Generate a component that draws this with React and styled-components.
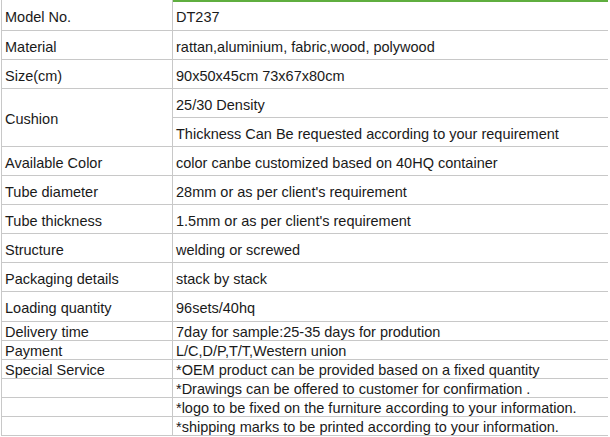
import React from 'react';
import styled, { createGlobalStyle } from 'styled-components';

const GlobalStyle = createGlobalStyle`
  html, body {
    margin: 0;
    padding: 0;
    background: #fff;
  }
  body {
    font-family: "Liberation Sans", Arial, sans-serif;
  }
`;

const Sheet = styled.div`
  display: grid;
  grid-template-columns: 170px 435px;
  grid-template-rows: 30px repeat(9, 28px) 29px repeat(6, 18px);
  gap: 1px;
  background: #c8c8c8;
  width: 607px;
  margin-left: 1px;
  padding: 0 1px 1px 1px;
  box-sizing: border-box;
`;

const Cell = styled.div`
  background: #fff;
  color: #1a1a1a;
  font-size: ${p => (p.$small ? '14.5px' : '14.5px')};
  display: flex;
  align-items: center;
  padding: ${p => (p.$small ? '1px 0 0 3px' : '3px 0 0 3px')};
  white-space: nowrap;
  overflow: hidden;
  grid-row: ${p => (p.$span ? `span ${p.$span}` : 'auto')};
  box-shadow: ${p => (p.$selected ? 'inset 0 2px 0 #5fae3f' : 'none')};
`;

const rows = [
  ['Model No.', 'DT237'],
  ['Material', 'rattan,aluminium, fabric,wood, polywood'],
  ['Size(cm)', '90x50x45cm 73x67x80cm'],
];

const middle = [
  ['Available Color', 'color canbe customized based on 40HQ container'],
  ['Tube diameter', "28mm or as per client's requirement"],
  ['Tube thickness', "1.5mm or as per client's requirement"],
  ['Structure', 'welding or screwed'],
  ['Packaging details', 'stack by stack'],
  ['Loading quantity', '96sets/40hq'],
];

const lower = [
  ['Delivery time', '7day for sample:25-35 days for prodution'],
  ['Payment', 'L/C,D/P,T/T,Western union'],
  ['Special Service', '*OEM product can be provided based on a fixed quantity'],
  ['', '*Drawings can be offered to customer for confirmation .'],
  ['', '*logo to be fixed on the furniture according to your information.'],
  ['', '*shipping marks to be printed according to your information.'],
];

export default function App() {
  return (
    <>
      <GlobalStyle />
      <Sheet>
        {rows.map(([k, v], i) => (
          <React.Fragment key={k}>
            <Cell>{k}</Cell>
            <Cell $selected={i === 0}>{v}</Cell>
          </React.Fragment>
        ))}
        <Cell $span={2}>Cushion</Cell>
        <Cell>25/30 Density</Cell>
        <Cell>Thickness Can Be requested according to your requirement</Cell>
        {middle.map(([k, v]) => (
          <React.Fragment key={k}>
            <Cell>{k}</Cell>
            <Cell>{v}</Cell>
          </React.Fragment>
        ))}
        {lower.map(([k, v], i) => (
          <React.Fragment key={i}>
            <Cell $small>{k}</Cell>
            <Cell $small>{v}</Cell>
          </React.Fragment>
        ))}
      </Sheet>
    </>
  );
}
